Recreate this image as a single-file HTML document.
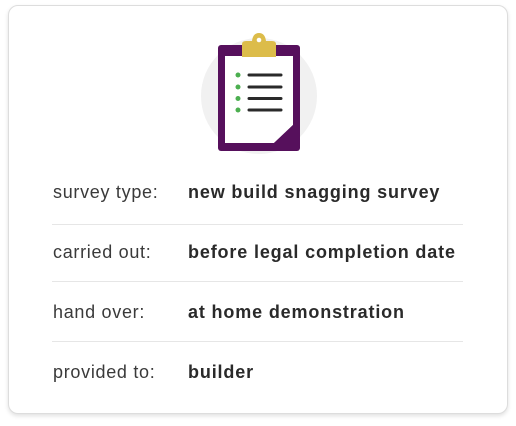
<!DOCTYPE html>
<html><head><style>
body{margin:0;width:516px;height:426px;background:#fff;font-family:"Liberation Sans",sans-serif;position:relative;overflow:hidden}
.card{position:absolute;left:8px;top:5px;width:498px;height:407px;border:1px solid #ddd;border-radius:10px;box-shadow:0 2px 4px rgba(0,0,0,.12);background:#fff}
.row{position:absolute;left:53px;width:410px;height:20px;font-size:18px;color:#333;line-height:20px}
.l{position:absolute;left:0;letter-spacing:.7px;color:#3a3a3a}
.v{position:absolute;left:135px;font-weight:bold;letter-spacing:.85px;color:#2a2a2a;white-space:nowrap}
.hr{position:absolute;left:52px;width:411px;height:1px;background:#e6e6e6}
</style></head><body>
<div class="card"></div>
<svg style="position:absolute;left:0;top:0" width="516" height="200">
<circle cx="259" cy="96" r="58" fill="#f1f1f1"/>
<rect x="218" y="45" width="82" height="106" rx="3" fill="#56105c"/>
<polygon points="225,56 293,56 293,125 274,143 225,143" fill="#fff"/>
<polygon points="293,125 293,143 274,143" fill="#56105c"/>
<path d="M242,57 V44 Q242,41 246,41 H252 Q253,33 259,33 Q265,33 266,41 H272 Q276,41 276,44 V57 Z" fill="#dcbc4a"/>
<circle cx="259" cy="40" r="2.3" fill="#fff"/>
<g fill="#4caf50"><circle cx="238" cy="75" r="2.5"/><circle cx="238" cy="87" r="2.5"/><circle cx="238" cy="98.5" r="2.5"/><circle cx="238" cy="110" r="2.5"/></g>
<g stroke="#2a2a2a" stroke-width="3" stroke-linecap="round"><line x1="249" y1="75" x2="281" y2="75"/><line x1="249" y1="87" x2="281" y2="87"/><line x1="249" y1="98.5" x2="281" y2="98.5"/><line x1="249" y1="110" x2="281" y2="110"/></g>
</svg>
<div class="row" style="top:182px"><span class="l">survey type:</span><span class="v">new build snagging survey</span></div>
<div class="hr" style="top:224px"></div>
<div class="row" style="top:242px"><span class="l">carried out:</span><span class="v">before legal completion date</span></div>
<div class="hr" style="top:281px"></div>
<div class="row" style="top:302px"><span class="l">hand over:</span><span class="v">at home demonstration</span></div>
<div class="hr" style="top:341px"></div>
<div class="row" style="top:362px"><span class="l">provided to:</span><span class="v">builder</span></div>
</body></html>
